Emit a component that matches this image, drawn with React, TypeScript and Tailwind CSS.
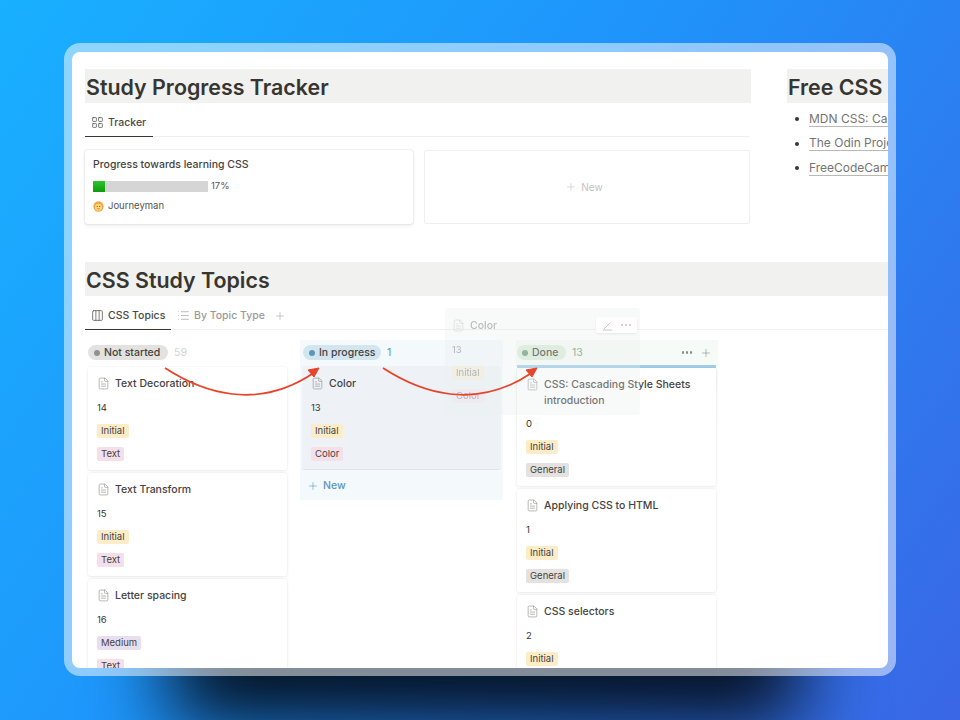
import { Columns3, FileText, LayoutGrid, List, Plus } from "lucide-react";

type Topic = {
  title: string[];
  num: string;
  level: string;
  kind: string;
};

const levelColors: Record<string, string> = {
  Initial: "bg-[#fdecc8]",
  Medium: "bg-[#e8deee]",
  Text: "bg-[#f5e0e9]",
  Color: "bg-[#f5e0e9]",
  General: "bg-[#e3e2e0]",
};

const notStarted: Topic[] = [
  { title: ["Text Decoration"], num: "14", level: "Initial", kind: "Text" },
  { title: ["Text Transform"], num: "15", level: "Initial", kind: "Text" },
  { title: ["Letter spacing"], num: "16", level: "Medium", kind: "Text" },
];

const done: Topic[] = [
  { title: ["CSS: Cascading Style Sheets", "introduction"], num: "0", level: "Initial", kind: "General" },
  { title: ["Applying CSS to HTML"], num: "1", level: "Initial", kind: "General" },
  { title: ["CSS selectors"], num: "2", level: "Initial", kind: "General" },
];

function Tag({ label }: { label: string }) {
  return (
    <span className={`h-[14px] rounded-[2px] px-[4px] text-[9.5px] leading-[14px] text-[#45433e] ${levelColors[label]}`}>
      {label}
    </span>
  );
}

function CardBody({ topic }: { topic: Topic }) {
  return (
    <>
      <div className={`flex gap-[5px] ${topic.title.length > 1 ? "-mb-px" : ""}`}>
        <FileText size={13} strokeWidth={1.3} className="mt-[1px] shrink-0 text-[#9b9a97]" />
        <div className="text-[10.5px] leading-[16px] font-medium text-[#45433e]">
          {topic.title.map((line) => (
            <div key={line}>{line}</div>
          ))}
        </div>
      </div>
      <div className="mt-[9px] h-[14px] text-[9.5px] leading-[14px] text-[#37352f]">{topic.num}</div>
      <div className="mt-[9px] flex h-[14px]">
        <Tag label={topic.level} />
      </div>
      <div className="mt-[9px] flex h-[14px]">
        <Tag label={topic.kind} />
      </div>
    </>
  );
}

function Card({ topic, className }: { topic: Topic; className?: string }) {
  return (
    <div className={`w-[199px] shrink-0 rounded-[3px] bg-white pt-[9px] pr-[8px] pb-[9px] pl-[9px] shadow-[0_0_0_1px_rgba(15,15,15,0.025),0_2px_4px_rgba(15,15,15,0.05)] ${className ?? ""}`}>
      <CardBody topic={topic} />
    </div>
  );
}

function Heading({ children, className }: { children: string; className?: string }) {
  return (
    <div className={`h-[34px] bg-[#f1f1ef] pl-[1px] text-[21.4px] leading-[36px] font-semibold whitespace-nowrap text-[#37352f] ${className ?? ""}`}>
      {children}
    </div>
  );
}

function Journeyman() {
  return (
    <svg width="11" height="11" viewBox="0 0 12 12">
      <circle cx="6" cy="6" r="5.6" fill="#eda548" />
      <circle cx="6" cy="6.8" r="3.9" fill="#fcd777" />
      <circle cx="4.6" cy="6" r="0.6" fill="#5a3a1a" />
      <circle cx="7.4" cy="6" r="0.6" fill="#5a3a1a" />
      <path d="M4.8 8.2 Q6 9.2 7.2 8.2" stroke="#a8501f" strokeWidth="0.7" fill="none" />
    </svg>
  );
}

function Resource({ label }: { label: string }) {
  return (
    <li className="flex h-[24.5px] items-center gap-[9px] pl-[8px]">
      <span className="h-[4px] w-[4px] shrink-0 rounded-full bg-[#37352f]" />
      <span className="ml-[1px] border-b border-[#b9b8b5] text-[12px] leading-[14px] whitespace-nowrap text-[#75746f]">{label}</span>
    </li>
  );
}

export default function App() {
  return (
    <div className="relative h-[720px] w-[960px] overflow-hidden bg-[linear-gradient(125deg,#19b0ff_0%,#1f94fb_45%,#3a66e6_100%)] pt-[43px] pl-[64px] font-['Inter',sans-serif]">
      {/* dark glow behind the window */}
      <div className="absolute top-[610px] left-[170px] h-[112px] w-[630px] bg-[#010811] blur-[40px]" />

      <div className="relative h-[633px] w-[832px] rounded-[16px] bg-white/50 pt-[9px] pr-[8px] pb-[8px] pl-[8px]">
        <div className="relative h-[616px] w-[816px] overflow-hidden rounded-[8px] bg-white pt-[17px]">
          {/* top section */}
          <div className="flex">
            <div className="ml-[13px] w-[666px] shrink-0">
              <Heading>Study Progress Tracker</Heading>
              <div className="mt-[9px] mr-[1px] flex h-[25px] border-b border-[#efefed]">
                <div className="-mb-px flex h-[25px] w-[68px] items-center gap-[4px] border-b-[1.5px] border-[#37352f] pb-[3px] pl-[6px] text-[10.5px] font-medium text-[#4a4945]">
                  <LayoutGrid size={13} strokeWidth={1.3} />
                  Tracker
                </div>
              </div>
              <div className="mt-[13px] flex gap-[11px]">
                <div className="h-[74px] w-[328px] rounded-[3px] bg-white pt-[7px] pl-[8px] shadow-[0_0_0_1px_rgba(15,15,15,0.05),0_2px_4px_rgba(15,15,15,0.07)]">
                  <div className="text-[10.5px] leading-[15px] font-medium text-[#45433e]">Progress towards learning CSS</div>
                  <div className="mt-[7px] flex items-center gap-[3px]">
                    <div className="h-[11px] w-[115px] bg-[#d5d5d5]">
                      <div className="h-[11px] w-[12px] bg-[linear-gradient(180deg,#2fc52f,#0c9c0c)]" />
                    </div>
                    <span className="text-[9.5px] text-[#55534e]">17%</span>
                  </div>
                  <div className="mt-[6px] flex items-center gap-[4px] text-[9.5px] text-[#55534e]">
                    <Journeyman />
                    Journeyman
                  </div>
                </div>
                <div className="flex h-[74px] w-[326px] items-center justify-center gap-[4px] rounded-[2px] border border-[#efefed] pr-[6px] text-[10px] text-[#c4c3c0]">
                  <Plus size={12} strokeWidth={1.2} />
                  New
                </div>
              </div>
            </div>
            <div className="ml-[36px] min-w-0 flex-1 overflow-hidden">
              <Heading>Free CSS Resources</Heading>
              <ul className="mt-[4px]">
                <Resource label="MDN CSS: Cascading Style Sheets" />
                <Resource label="The Odin Project Foundations" />
                <Resource label="FreeCodeCamp Responsive Design" />
              </ul>
            </div>
          </div>

          {/* topics section */}
          <div className="mt-[38px] ml-[13px]">
            <Heading>CSS Study Topics</Heading>
            <div className="mt-[9px] flex h-[25px] items-start gap-[6px] border-b border-[#efefed] text-[10.5px] font-medium">
              <div className="-mb-px flex h-[25px] w-[86px] items-center gap-[4px] border-b-[1.5px] border-[#37352f] pb-[3px] pl-[6px] text-[#4a4945]">
                <Columns3 size={13} strokeWidth={1.3} />
                CSS Topics
              </div>
              <div className="flex h-[21px] items-center gap-[4px] text-[#9b9a97]">
                <List size={13} strokeWidth={1.2} />
                By Topic Type
              </div>
              <div className="flex h-[21px] items-center pl-[3px] text-[#a9a8a5]">
                <Plus size={12} strokeWidth={1.2} />
              </div>
            </div>

            <div className="flex items-start">
              {/* Not started */}
              <div className="ml-[3px] w-[212px] shrink-0 pt-[15px]">
                <div className="flex h-[22px] items-start gap-[6px]">
                  <span className="flex h-[15px] w-[80px] items-center gap-[4px] rounded-full bg-[#e3e2e0] pl-[6px] text-[10.5px] font-medium text-[#45433e]">
                    <span className="h-[6px] w-[6px] rounded-full bg-[#91918e]" />
                    Not started
                  </span>
                  <span className="text-[10.5px] leading-[15px] text-[#d4d3d0]">59</span>
                </div>
                <div className="flex flex-col gap-[3px]">
                  {notStarted.map((t) => (
                    <Card key={t.num} topic={t} />
                  ))}
                </div>
              </div>

              {/* In progress */}
              <div className="mt-[10px] h-[160px] w-[203px] shrink-0 rounded-[3px] bg-[#f4f9fc] pt-[5px] pl-[2px]">
                <div className="ml-px flex h-[21px] items-start gap-[6px]">
                  <span className="flex h-[15px] w-[78px] items-center gap-[4px] rounded-full bg-[#d3e5ef] pl-[6px] text-[10.5px] font-medium text-[#45433e]">
                    <span className="h-[6px] w-[6px] rounded-full bg-[#5b97bd]" />
                    In progress
                  </span>
                  <span className="text-[10.5px] leading-[15px] text-[#5b97bd]">1</span>
                </div>
                <div className="w-[199px] rounded-[3px] border-b border-[#dfe4e8] bg-[#eef2f6] pt-[10px] pr-[8px] pb-[8px] pl-[9px]">
                  <CardBody topic={{ title: ["Color"], num: "13", level: "Initial", kind: "Color" }} />
                </div>
                <div className="mt-[8px] flex items-center gap-[4px] pl-[5px] text-[10.5px] font-medium text-[#5b97bd]">
                  <Plus size={12} strokeWidth={1.2} />
                  New
                </div>
              </div>

              {/* Done */}
              <div className="mt-[10px] ml-[13px] w-[202px] shrink-0 bg-[linear-gradient(180deg,#f5faf6_0px,#ffffff_110px)] pt-[5px] pl-px">
                <div className="flex h-[20px] items-start justify-between pr-[6px]">
                  <div className="flex items-start gap-[6px]">
                    <span className="flex h-[15px] w-[49px] items-center gap-[4px] rounded-full bg-[#dbeddb] pl-[5px] text-[10.5px] font-medium text-[#45433e]">
                      <span className="h-[6px] w-[6px] rounded-full bg-[#6c9b7d]" />
                      Done
                    </span>
                    <span className="text-[10.5px] leading-[15px] text-[#6c9b7d]">13</span>
                  </div>
                  <div className="flex h-[15px] items-center gap-[8px] text-[#8b8a86]">
                    <span className="flex gap-[1.5px]">
                      <span className="h-[2.5px] w-[2.5px] rounded-full bg-[#8b8a86]" />
                      <span className="h-[2.5px] w-[2.5px] rounded-full bg-[#8b8a86]" />
                      <span className="h-[2.5px] w-[2.5px] rounded-full bg-[#8b8a86]" />
                    </span>
                    <Plus size={12} strokeWidth={1.2} />
                  </div>
                </div>
                <div className="h-[3px] w-[199px] bg-[#a0cdec]" />
                <div className="flex flex-col gap-[3px]">
                  {done.map((t) => (
                    <Card key={t.num} topic={t} />
                  ))}
                </div>
              </div>
            </div>
          </div>

          {/* dragged card */}
          <div className="absolute top-[256px] left-[373px] h-[107px] w-[195px] rounded-[3px] bg-[#e9edef]/30 pt-[10px] pl-[7px]">
            <div className="opacity-35">
              <CardBody topic={{ title: ["Color"], num: "13", level: "Initial", kind: "Color" }} />
            </div>
          </div>
          <div className="absolute top-[265px] left-[524px] flex h-[16px] w-[41px] items-center justify-center gap-[8px] rounded-[2px] bg-white/80 text-[#c4c3c0] shadow-[0_1px_2px_rgba(15,15,15,0.08)]">
            <svg width="11" height="11" viewBox="0 0 12 12" fill="none" stroke="currentColor" strokeWidth="1">
              <path d="M2 10 L9 3" />
              <path d="M1 11 H11" />
            </svg>
            <span className="flex gap-[1.5px]">
              <span className="h-[2.5px] w-[2.5px] rounded-full bg-[#c4c3c0]" />
              <span className="h-[2.5px] w-[2.5px] rounded-full bg-[#c4c3c0]" />
              <span className="h-[2.5px] w-[2.5px] rounded-full bg-[#c4c3c0]" />
            </span>
          </div>

          {/* arrows */}
          <svg className="absolute top-0 left-0" width="816" height="616" viewBox="0 0 816 616" fill="none">
            <path d="M93 316 C130 340 185 360 243 320" stroke="#e8432a" strokeWidth="1.7" />
            <path d="M247 316 L236 318 L242 325 Z" fill="#e8432a" stroke="#e8432a" />
            <path d="M311 316 C348 340 403 360 461 320" stroke="#e8432a" strokeWidth="1.7" />
            <path d="M465 316 L454 318 L460 325 Z" fill="#e8432a" stroke="#e8432a" />
          </svg>
        </div>
      </div>
    </div>
  );
}
